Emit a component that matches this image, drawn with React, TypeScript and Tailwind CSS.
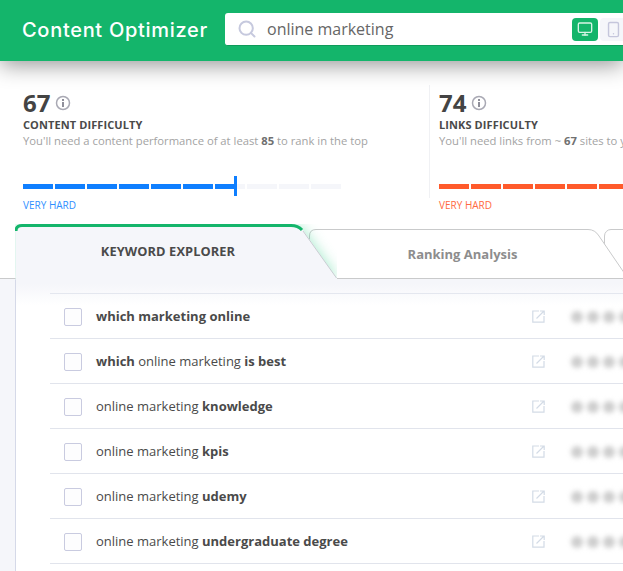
import { Monitor, Search, Smartphone } from 'lucide-react'
import type { ReactNode } from 'react'

const font = { fontFamily: '"Open Sans", sans-serif' }

interface Keyword {
  id: number
  text: ReactNode
}

const keywords: Keyword[] = [
  { id: 1, text: <b className="font-bold">which marketing online</b> },
  { id: 2, text: <><b className="font-bold">which</b> online marketing <b className="font-bold">is best</b></> },
  { id: 3, text: <>online marketing <b className="font-bold">knowledge</b></> },
  { id: 4, text: <>online marketing <b className="font-bold">kpis</b></> },
  { id: 5, text: <>online marketing <b className="font-bold">udemy</b></> },
  { id: 6, text: <>online marketing <b className="font-bold">undergraduate degree</b></> },
]

function InfoIcon() {
  return (
    <svg width="16" height="16" viewBox="0 0 16 16" fill="none">
      <circle cx="8" cy="8" r="6.5" stroke="#a9a9b4" strokeWidth="1.5" />
      <rect x="7" y="4" width="2" height="2" fill="#8f8f9a" />
      <rect x="7" y="7" width="2" height="5" fill="#8f8f9a" />
    </svg>
  )
}

function ExternalIcon() {
  return (
    <svg width="13" height="13" viewBox="0 0 13 13" fill="none" stroke="#d3dbe6" strokeWidth="1.2">
      <path d="M7 1H.8v11.2H12V6" />
      <path d="M4.5 8.5 11.5 1.5M8 1h4.2v4" />
    </svg>
  )
}

function Stat(props: {
  value: number
  label: string
  desc: ReactNode
  filled: number
  color: string
  text: string
  marker?: boolean
}) {
  return (
    <div className="shrink-0">
      <div className="flex items-center gap-[5px] h-[24px]">
        <span className="text-[24px] leading-[24px] font-bold text-[#444444]">{props.value}</span>
        <InfoIcon />
      </div>
      <div className="mt-[3px] text-[11px] leading-[14px] font-bold text-[#4a4a4a] tracking-[0.1px]">{props.label}</div>
      <div className="mt-[1px] text-[11.25px] leading-[16px] text-[#a3a3a3] whitespace-nowrap">{props.desc}</div>
      <div className="relative mt-[35px] flex gap-[2px] h-[5px]">
        {Array.from({ length: 10 }).map((_, i) => (
          <div
            key={i}
            className="w-[30px] h-[5px]"
            style={{ background: i < props.filled ? props.color : '#f5f6fa' }}
          />
        ))}
        {props.marker && (
          <>
            <div className="absolute left-[192px] top-0 w-[20px] h-[5px] bg-[#0f7fff]" />
            <div className="absolute left-[211px] top-[-8px] w-[3px] h-[20px] bg-[#0f7fff]" />
          </>
        )}
      </div>
      <div className="mt-[10px] text-[10px] leading-[12px]" style={{ color: props.text }}>VERY HARD</div>
    </div>
  )
}

function TabShape() {
  return (
    <svg className="absolute left-0 top-0" width="322" height="56" viewBox="0 0 322 56" fill="none">
      <path
        d="M.5 56V7Q.5 .5 7 .5H276Q284 .5 288 6L321.5 54H323V56Z"
        fill="#f5f6fa"
        style={{ filter: 'drop-shadow(0 0 7px rgba(20,200,120,.4))' }}
      />
      <path d="M288 7 321.5 54" stroke="#c9cdd2" />
      <path d="M1 7Q1 1.5 7 1.5H276Q283 1.5 287 6" stroke="#14b56b" strokeWidth="3" />
    </svg>
  )
}

function SideTabShape() {
  return (
    <svg className="absolute left-0 top-0" width="320" height="50" viewBox="0 0 320 50" fill="none">
      <path
        d="M.5 49.5V7Q.5 .5 7 .5H279Q286 .5 290 7L319 49.5Z"
        fill="#fff"
        stroke="#c9cacb"
      />
    </svg>
  )
}

export default function App() {
  return (
    <div className="relative w-[623px] h-[571px] overflow-hidden bg-white" style={font}>
      {/* Header */}
      <header className="relative z-30 h-[61px] flex items-center bg-[#14b56b] shadow-[0_4px_22px_rgba(0,0,0,0.42)]">
        <h1 className="ml-[22px] -mt-[2px] w-[203px] shrink-0 text-[20px] font-medium text-white tracking-[0.7px] whitespace-nowrap" style={{ fontFamily: 'Inter, sans-serif' }}>
          Content Optimizer
        </h1>
        <div className="w-[500px] shrink-0 h-[33px] -mt-[3px] pt-[1px] flex items-center bg-white rounded-[3px] border-b border-[#0f9a5a]">
          <Search size={20} strokeWidth={2.4} className="ml-[12px] text-[#c6c9de]" />
          <span className="ml-[10px] w-[305px] text-[16px] text-[#666666]">online marketing</span>
          <div className="w-[26px] h-[23px] flex items-center justify-center rounded-[4px] bg-[#14b56b]">
            <Monitor size={16} className="text-[#d7f5e6]" />
          </div>
          <div className="ml-[2px] w-[26px] h-[23px] flex items-center justify-center rounded-[4px] bg-[#f5f6fa]">
            <Smartphone size={17} className="text-[#c5c6dc]" />
          </div>
        </div>
      </header>

      {/* Stats */}
      <section className="h-[163px] flex pt-[30px] pl-[23px]">
        <div className="w-[406px] shrink-0">
          <Stat
            value={67}
            label="CONTENT DIFFICULTY"
            desc={<>You'll need a content performance of at least <b className="font-bold text-[#707070]">85</b> to rank in the top</>}
            filled={6}
            color="#0f7fff"
            text="#2f8fff"
            marker
          />
        </div>
        <div className="w-px h-[113px] -mt-[6px] mr-[9px] shrink-0 bg-[#f0f1f4]" />
        <Stat
          value={74}
          label="LINKS DIFFICULTY"
          desc={<>You'll need links from ~ <b className="font-bold text-[#707070]">67</b> sites to your page</>}
          filled={10}
          color="#ff5a2b"
          text="#ff6a42"
        />
      </section>

      {/* Tabs */}
      <div className="relative h-[55px] flex items-start border-b border-[#c9cacb]">
        <button className="relative z-20 ml-[15px] w-[322px] h-[55px] shrink-0">
          <TabShape />
          <span className="relative block pr-[16px] text-[12.8px] font-bold text-[#4a4a4a] tracking-[0.1px]">KEYWORD EXPLORER</span>
        </button>
        <button className="relative z-10 -ml-[28px] mt-[5px] w-[320px] h-[50px] shrink-0">
          <SideTabShape />
          <span className="relative block pt-[1px] pr-[13px] text-[13px] font-bold text-[#8d8d8d]">Ranking Analysis</span>
        </button>
        <div className="relative -ml-[25px] mt-[5px] w-[100px] h-[50px] shrink-0 rounded-tl-[7px] border border-[#c9cacb] bg-white" />
      </div>

      {/* Keyword list */}
      <div className="flex h-[400px] bg-[#f5f6fa]">
        <div className="ml-[15px] flex-1 border-l border-[#d5d9e8] pl-[34px] bg-gradient-to-b from-[#f5f6fa] from-[5px] to-white to-[26px]">
          <ul className="mt-[14px] border-t border-[#e4e7ef]">
            {keywords.map((k) => (
              <li key={k.id} className="h-[45px] pt-[1px] flex items-center border-b border-[#e1e4ec]">
                <span className="ml-[14px] w-[18px] h-[18px] shrink-0 rounded-[2px] border border-[#c9cbe0] bg-[#fdfdfe]" />
                <span className="ml-[14px] w-[436px] shrink-0 text-[13px] text-[#4a4a4a] whitespace-nowrap">{k.text}</span>
                <ExternalIcon />
                <div className="ml-[26px] flex gap-[4px] blur-[2.5px]">
                  {[0, 1, 2, 3].map((d) => (
                    <span key={d} className="w-[12px] h-[12px] shrink-0 rounded-full bg-[#cdcdcd]" />
                  ))}
                </div>
              </li>
            ))}
          </ul>
        </div>
      </div>
    </div>
  )
}
